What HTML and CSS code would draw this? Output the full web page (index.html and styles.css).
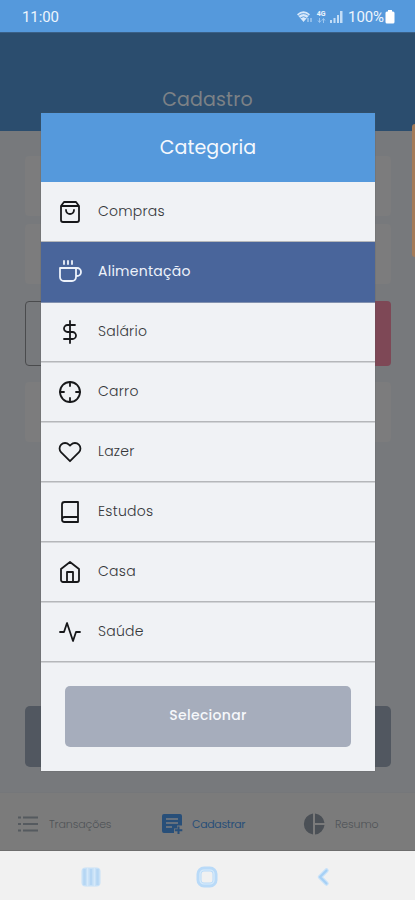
FILE: index.html
```html
<!DOCTYPE html>
<html lang="pt-BR">
<head>
<meta charset="utf-8">
<title>Cadastro</title>
<link rel="stylesheet" href="styles.css">
</head>
<body>
<div class="phone">
  <header class="status">
    <span class="clock">11:00</span>
    <div class="indicators">
      <svg class="wifi" width="17" height="14" viewBox="0 0 17 14"><path d="M1 4.2Q7.500-1.500 14 4.200L7.500 12Z" fill="#d9e9fa"/><path d="M2.500 5.500q5-3.800 10 0M4.500 7.800q3-2.200 6 0" fill="none" stroke="#5599dc" stroke-width=".9"/><path d="M12 8v4M15 8v4" stroke="#b5d5f3" stroke-width="1.200"/></svg>
      <span class="net"><b>4G</b><svg width="9" height="5" viewBox="0 0 9 5"><path d="M2.500 0v4M1 2.500l1.500 2L4 2.500M6.500 5V1M5 2.500l1.500-2L8 2.500" fill="none" stroke="#a5cbf0" stroke-width=".9"/></svg></span>
      <svg class="signal" width="13" height="12" viewBox="0 0 13 12" fill="#c3ddf6"><path d="M0 9h2v3H0zM3.500 7h2v5h-2zM7 4h2v8H7zM10 0h2.500v12H10z"/></svg>
      <span class="percent">100%</span>
      <svg class="battery" width="10" height="14" viewBox="0 0 10 14"><path d="M3 0h4v1.500h1q1.500 0 1.500 1.500v9q0 1.500-1.500 1.500H2Q.5 13.500.5 12V3Q.5 1.500 2 1.500h1z" fill="#fff"/></svg>
    </div>
  </header>
  <div class="title-bar"><h1>Cadastro</h1></div>
  <main class="form">
    <div class="field"></div>
    <div class="field"></div>
    <div class="types"><div class="type income"></div><div class="type expense"></div></div>
    <div class="field"></div>
    <div class="submit"></div>
  </main>
  <nav class="tabs">
    <div class="tab tab-list">
      <svg width="20" height="16" viewBox="0 0 20 16" stroke="#555a5f" stroke-width="2"><path d="M0 1.500h3M5 1.500h15M0 8h3M5 8h15M0 14.500h3M5 14.500h15"/></svg>
      <span>Transações</span>
    </div>
    <div class="tab tab-add">
      <svg width="21" height="20" viewBox="0 0 21 20"><path d="M2 0h16q2 0 2 2v9.500h-5v3h-3V19H2q-2 0-2-2V2Q0 0 2 0z" fill="#284f79"/><path d="M4 5h12M4 9h12M4 13h6" stroke="#7b7d80" stroke-width="1.700"/><path d="M16.500 12.500v7.500M12.800 16.200h7.500" stroke="#284f79" stroke-width="2"/></svg>
      <span>Cadastrar</span>
    </div>
    <div class="tab tab-chart">
      <svg width="22" height="22" viewBox="0 0 22 22" fill="#4b5056"><path d="M10 .5v21A10.600 10.600 0 0 1 10 .5zM12 .5A10.600 10.600 0 0 1 21.500 10H12zM12 12h9.500a10.600 10.600 0 0 1-9.500 9.500z"/></svg>
      <span>Resumo</span>
    </div>
  </nav>
  <footer class="system">
    <svg width="20" height="20" viewBox="0 0 20 20"><rect x=".5" y=".5" width="19" height="19" rx="4" fill="#c8e1f7"/><path d="M3.500 2v16M10 2v16M16.500 2v16" stroke="#b5d6f4" stroke-width="2.500"/><path d="M6.700 1v18M13.300 1v18" stroke="#d8eafa" stroke-width="1"/></svg>
    <svg width="22" height="22" viewBox="0 0 22 22" fill="none"><rect x="3" y="3" width="16" height="16" rx="5" stroke="#b9daf8" stroke-width="5"/><rect x="4" y="4" width="14" height="14" rx="4" stroke="#d9ecfb" stroke-width="1.200"/><rect x="6.500" y="6.500" width="9" height="9" rx="2" fill="#f1f1f1"/></svg>
    <svg width="14" height="20" viewBox="0 0 14 20" fill="none" stroke-linecap="round" stroke-linejoin="round"><path d="M10.500 3.500L4 10l6.500 6.500" stroke="#c8e2f9" stroke-width="4.500"/><path d="M10.500 3.500L4 10l6.500 6.500" stroke="#a6d0f5" stroke-width="2"/></svg>
  </footer>
  <div class="edge-panel"></div>

  <section class="modal">
    <h2>Categoria</h2>
    <ul>
      <li><svg class="icon" viewBox="0 0 24 24"><path d="M6 2L3 6v14a2 2 0 0 0 2 2h14a2 2 0 0 0 2-2V6l-3-4zM3 6h18M16 10a4 4 0 0 1-8 0"/></svg><span>Compras</span></li>
      <li class="selected"><svg class="icon" viewBox="0 0 24 24"><path d="M18 8h1a4 4 0 0 1 0 8h-1M2 8h16v9a4 4 0 0 1-4 4H6a4 4 0 0 1-4-4zM6 1v3M10 1v3M14 1v3"/></svg><span>Alimentação</span></li>
      <li><svg class="icon" viewBox="0 0 24 24"><path d="M12 1v22M17 5H9.500a3.500 3.500 0 0 0 0 7h5a3.500 3.500 0 0 1 0 7H6"/></svg><span>Salário</span></li>
      <li><svg class="icon" viewBox="0 0 24 24"><circle cx="12" cy="12" r="10"/><path d="M22 12h-4M6 12H2M12 6V2M12 22v-4"/></svg><span>Carro</span></li>
      <li><svg class="icon" viewBox="0 0 24 24"><path d="M20.840 4.610a5.500 5.500 0 0 0-7.780 0L12 5.670l-1.060-1.060a5.500 5.500 0 0 0-7.780 7.780l1.060 1.060L12 21.230l7.780-7.780 1.060-1.060a5.500 5.500 0 0 0 0-7.780z"/></svg><span>Lazer</span></li>
      <li><svg class="icon" viewBox="0 0 24 24"><path d="M4 19.500A2.500 2.500 0 0 1 6.500 17H20M6.500 2H20v20H6.500A2.500 2.500 0 0 1 4 19.500v-15A2.500 2.500 0 0 1 6.500 2z"/></svg><span>Estudos</span></li>
      <li><svg class="icon" viewBox="0 0 24 24"><path d="M3 9l9-7 9 7v11a2 2 0 0 1-2 2H5a2 2 0 0 1-2-2zM9 22V12h6v10"/></svg><span>Casa</span></li>
      <li><svg class="icon" viewBox="0 0 24 24"><path d="M22 12h-4l-3 9L9 3l-3 9H2"/></svg><span>Saúde</span></li>
    </ul>
    <div class="actions"><button>Selecionar</button></div>
  </section>
</div>
</body>
</html>
```
FILE: styles.css
```css
* { box-sizing: border-box; }
body { margin: 0; font-family: Poppins, Inter, sans-serif; }
.phone { position: relative; width: 415px; height: 900px; overflow: hidden; display: flex; flex-direction: column; background: #77797c; }

.status { height: 32px; flex: none; display: flex; align-items: center; justify-content: space-between; padding: 2px 20px 0 22px; background: #5599dc; color: #edf5fd; font-family: Roboto, sans-serif; font-size: 15px; }
.clock { letter-spacing: -.1px; }
.indicators { display: flex; align-items: center; }
.net { display: flex; flex-direction: column; align-items: center; width: 10px; margin-left: 3px; font-size: 7px; line-height: 7px; }
.signal { margin-left: 4px; }
.percent { margin-left: 5px; font-size: 15px; letter-spacing: -.1px; }
.battery { margin-left: 1px; }

.title-bar { height: 99px; flex: none; display: flex; align-items: flex-end; justify-content: center; background: #2b4d6e; border-top: 1px solid #3a6087; }
.title-bar h1 { margin: 0 0 18px; font-size: 19px; line-height: 27px; font-weight: 400; letter-spacing: .15px; color: #7c8186; }

.form { flex: 1; display: flex; flex-direction: column; padding: 25px 24px 25px 25px; }
.field { height: 60px; margin-bottom: 8px; border-radius: 4px; background: #7c7c7d; }
.types { display: flex; justify-content: space-between; height: 65px; margin: 9px 0 16px; }
.type { width: 160px; border-radius: 4px; }
.income { border: 1.5px solid #4a4b4d; }
.expense { background: #7e4856; }
.submit { height: 61px; margin-top: auto; border-radius: 5px; background: #515760; }

.tabs { height: 59px; flex: none; display: flex; align-items: center; padding: 4px 0 0 18px; background: #7b7b7b; border-top: 1px solid #75777a; border-bottom: 1px solid #6d6d6d; color: #4f5357; font-size: 11px; font-weight: 300; }
.tab { display: flex; align-items: center; }
.tab span { padding-top: 2px; }
.tab-list { width: 144px; gap: 11px; }
.tab-list span { letter-spacing: -.1px; }
.tab-add { width: 141px; gap: 9px; color: #284f79; }
.tab-add span { letter-spacing: -.35px; font-weight: 400; }
.tab-chart { gap: 10px; }
.tab-chart span { letter-spacing: -.1px; }
.system { height: 49px; flex: none; display: flex; align-items: center; padding: 3px 0 0 81px; background: #f1f1f1; }
.system svg + svg { margin-left: 95px; }
.system svg + svg + svg { margin-left: 98px; }

.edge-panel { position: absolute; right: 0; top: 124px; width: 3px; height: 133px; border-radius: 3px 0 0 3px; background: #a47b58; }

.modal { position: absolute; left: 41px; top: 113px; width: 334px; height: 658px; background: #f0f2f5; box-shadow: 0 0 1px #55585b; }
.modal h2 { height: 69px; margin: 0; display: flex; align-items: center; justify-content: center; padding-bottom: 1px; background: #5599dc; color: #f4f8fd; font-size: 19px; font-weight: 400; letter-spacing: .05px; }
.modal ul { list-style: none; margin: 0; padding: 0; }
.modal li { height: 60px; display: flex; align-items: center; gap: 17px; padding: 1px 17px 0; border-bottom: 1px solid #b5b7ba; box-shadow: 0 1px #d2d4d7; color: #35373a; font-size: 14px; font-weight: 300; letter-spacing: .25px; }
.modal li span { margin-left: -1px; padding-bottom: 1px; }
.modal .selected { background: #49659b; border-color: #49659b; box-shadow: 0 1px #8291af; color: #edf2fa; font-weight: 400; }
.icon { width: 24px; height: 24px; flex: none; fill: none; stroke: #17181a; stroke-width: 1.800; stroke-linecap: round; stroke-linejoin: round; }
.selected .icon { stroke: #edf2fa; }
.actions { padding: 24px; }
.actions button { display: block; width: 286px; height: 61px; padding: 0 0 3px; border: 0; border-radius: 5px; background: #a6adbc; color: #f6f8fb; font: 500 14px Poppins, Inter, sans-serif; letter-spacing: .3px; }
```
